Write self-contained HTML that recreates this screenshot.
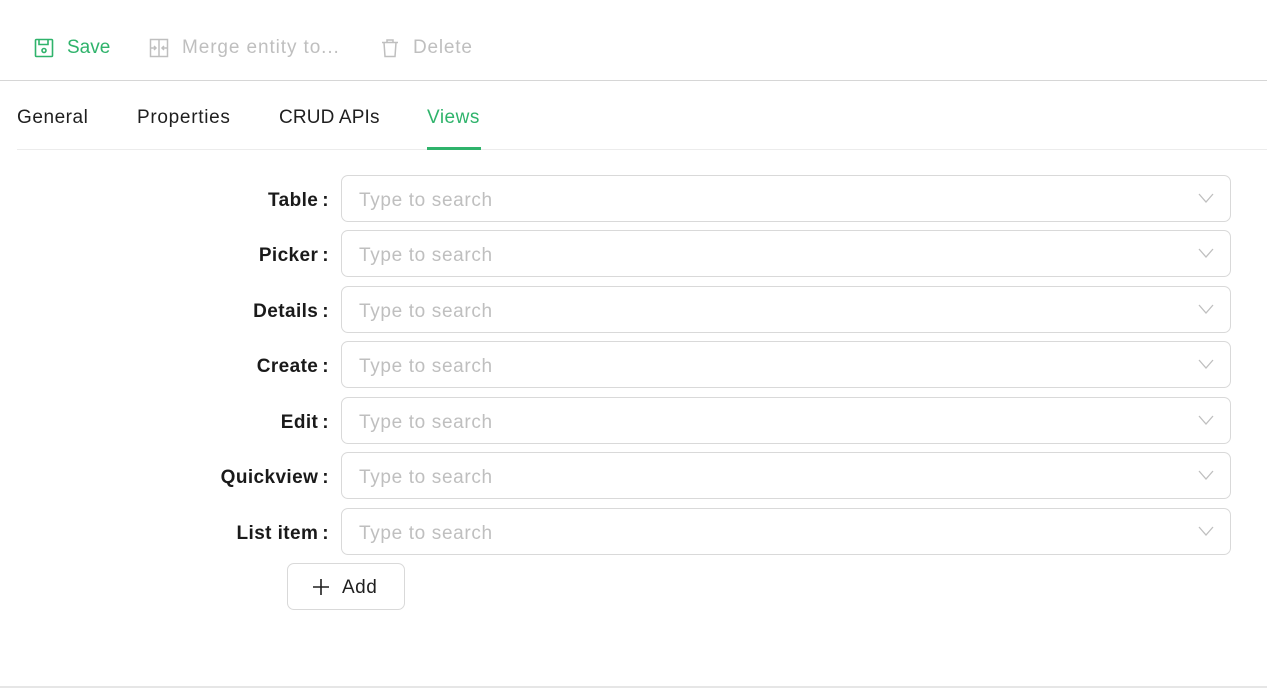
<!DOCTYPE html>
<html><head><meta charset="utf-8"><style>
*{box-sizing:border-box;margin:0;padding:0}
body{width:1267px;height:691px;background:#fff;font-family:"Liberation Sans",sans-serif;position:relative;overflow:hidden;color:#1f1f1f}
.tb{position:absolute;top:37px;font-size:19px;display:flex;align-items:center;gap:13px;letter-spacing:0.8px}
.tb svg{width:20px;height:20px}
.hr1{position:absolute;left:0;right:0;top:80px;height:1px;background:#d6d6d6}
.tab{position:absolute;top:107px;font-size:19px;letter-spacing:0.7px}
.hr2{position:absolute;left:17px;right:0;top:149px;height:1px;background:#ececec}
.ink{position:absolute;left:427px;width:54px;top:147px;height:3px;background:#2fb36b}
.lbl{position:absolute;right:938px;font-size:19px;font-weight:bold;color:#1a1a1a;height:47px;line-height:52px;letter-spacing:0.4px}
.lbl span{margin-left:4px}
.in{position:absolute;left:341px;width:890px;height:47px;border:1px solid #d9d9d9;border-radius:7px;font-size:19px;color:#bfbfbf;line-height:50px;padding-left:17px;letter-spacing:0.65px}
.in svg{position:absolute;right:16px;top:16px;width:16px;height:12px}
.add{position:absolute;left:287px;top:563px;width:118px;height:47px;border:1px solid #d9d9d9;border-radius:7px;font-size:19px;line-height:48px;padding-left:24px;color:#1f1f1f;letter-spacing:0.5px}
.bot{position:absolute;left:0;right:0;top:686px;height:2px;background:#e6e6e6}
</style></head><body>
<div class="tb" style="left:34px;color:#2fb36b;letter-spacing:0"><svg viewBox="0 0 20 20" fill="none" stroke="#2fb36b" stroke-width="1.6"><rect x="1.5" y="1.5" width="17" height="17" rx="1"/><path d="M5 1.5v5h9v-5"/><circle cx="10" cy="12.5" r="2"/></svg><span>Save</span></div>
<div class="tb" style="left:149px;color:#bfbfbf;letter-spacing:0.9px"><svg viewBox="0 0 20 20" fill="none" stroke="#bfbfbf" stroke-width="1.5"><rect x="1.5" y="1.5" width="17" height="17"/><path d="M10 1.5v17M1.5 10h5M13.5 10h5M5 8l2 2-2 2M15 8l-2 2 2 2"/></svg><span>Merge entity to...</span></div>
<div class="tb" style="left:380px;color:#bfbfbf"><svg viewBox="0 0 20 20" fill="none" stroke="#bfbfbf" stroke-width="1.5"><path d="M2 4.5h16M7 4.5V2h6v2.5M4 4.5l1 14h10l1-14"/></svg><span>Delete</span></div>
<div class="hr1"></div>
<div class="tab" style="left:17px;letter-spacing:0.55px">General</div>
<div class="tab" style="left:137px">Properties</div>
<div class="tab" style="left:279px;letter-spacing:0.15px">CRUD APIs</div>
<div class="tab" style="left:427px;color:#2fb36b;letter-spacing:0.5px">Views</div>
<div class="hr2"></div><div class="ink"></div>

<div class="lbl" style="top:175px">Table<span>:</span></div><div class="in" style="top:175px">Type to search<svg viewBox="0 0 16 12" fill="none" stroke="#bfbfbf" stroke-width="1.3"><path d="M1 2l7 8 7-8"/></svg></div>
<div class="lbl" style="top:230px">Picker<span>:</span></div><div class="in" style="top:230px">Type to search<svg viewBox="0 0 16 12" fill="none" stroke="#bfbfbf" stroke-width="1.3"><path d="M1 2l7 8 7-8"/></svg></div>
<div class="lbl" style="top:286px">Details<span>:</span></div><div class="in" style="top:286px">Type to search<svg viewBox="0 0 16 12" fill="none" stroke="#bfbfbf" stroke-width="1.3"><path d="M1 2l7 8 7-8"/></svg></div>
<div class="lbl" style="top:341px">Create<span>:</span></div><div class="in" style="top:341px">Type to search<svg viewBox="0 0 16 12" fill="none" stroke="#bfbfbf" stroke-width="1.3"><path d="M1 2l7 8 7-8"/></svg></div>
<div class="lbl" style="top:397px">Edit<span>:</span></div><div class="in" style="top:397px">Type to search<svg viewBox="0 0 16 12" fill="none" stroke="#bfbfbf" stroke-width="1.3"><path d="M1 2l7 8 7-8"/></svg></div>
<div class="lbl" style="top:452px">Quickview<span>:</span></div><div class="in" style="top:452px">Type to search<svg viewBox="0 0 16 12" fill="none" stroke="#bfbfbf" stroke-width="1.3"><path d="M1 2l7 8 7-8"/></svg></div>
<div class="lbl" style="top:508px">List item<span>:</span></div><div class="in" style="top:508px">Type to search<svg viewBox="0 0 16 12" fill="none" stroke="#bfbfbf" stroke-width="1.3"><path d="M1 2l7 8 7-8"/></svg></div>

<div class="add"><svg viewBox="0 0 18 18" width="18" height="18" style="vertical-align:-3px;margin-right:12px" fill="none" stroke="#1f1f1f" stroke-width="1.6"><path d="M9 1v16M1 9h16"/></svg>Add</div>
<div class="bot"></div>
</body></html>
